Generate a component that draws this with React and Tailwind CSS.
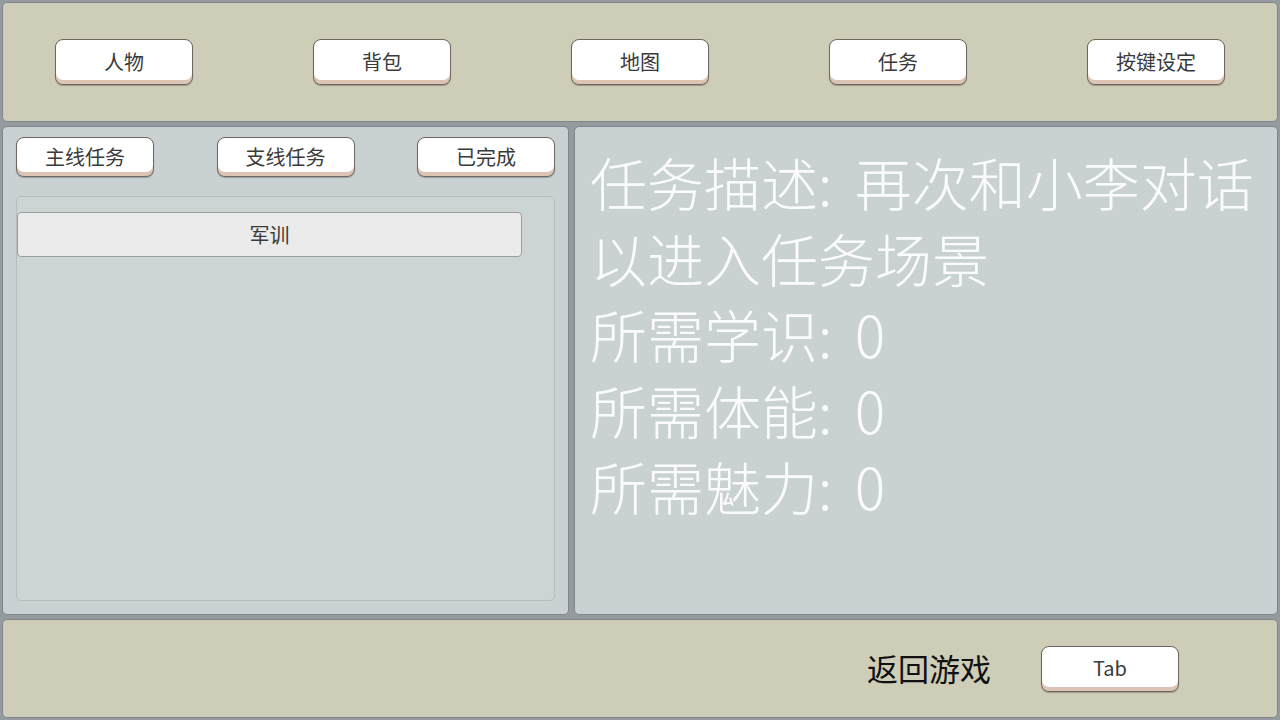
import React from "react";

const TOP_TABS = ["人物", "背包", "地图", "任务", "按键设定"];
const QUEST_TABS = ["主线任务", "支线任务", "已完成"];
const QUESTS = ["军训"];

const FONT = {
  fontFamily: '"Noto Sans CJK SC", "Noto Sans", sans-serif',
};

function GameButton({ children, className = "" }) {
  return (
    <button
      className={`flex items-center justify-center rounded-[8px] border-[1.5px] border-[#6e665f] bg-white text-[#3a3a3a] shadow-[inset_0_-4px_0_#dcc4b4,0_1px_1px_rgba(0,0,0,0.25)] ${className}`}
    >
      {children}
    </button>
  );
}

export default function App() {
  return (
    <div
      style={FONT}
      className="flex h-[720px] w-[1280px] flex-col gap-[4px] overflow-hidden bg-[#959a9e] p-[2px]"
    >
      {/* top nav */}
      <div className="flex h-[120px] shrink-0 items-center justify-between rounded-[5px] border border-[#7f8589] bg-[#cecdb8] px-[52px]">
        {TOP_TABS.map((t) => (
          <GameButton key={t} className="h-[46px] w-[138px] pb-[1px] text-[20px]">
            {t}
          </GameButton>
        ))}
      </div>

      {/* middle */}
      <div className="flex h-[489px] shrink-0 gap-[5px]">
        <div className="flex w-[567px] flex-col rounded-[5px] border border-[#7f8589] bg-[#c9d1d3] px-[13px] pb-[13px] pt-[10px]">
          <div className="flex justify-between">
            {QUEST_TABS.map((t) => (
              <GameButton key={t} className="h-[40px] w-[138px] text-[20px]">
                {t}
              </GameButton>
            ))}
          </div>
          <div className="mt-[19px] flex-1 rounded-[5px] border border-[#b6bdbf] bg-[#cdd4d4] pr-[32px] pt-[15px]">
            {QUESTS.map((q) => (
              <div
                key={q}
                className="flex h-[45px] items-center justify-center rounded-[4px] border border-[#9a9c9d] bg-[#ebebeb] text-[20px] text-[#3a3a3a]"
              >
                {q}
              </div>
            ))}
          </div>
        </div>

        <div className="flex-1 rounded-[5px] border border-[#7f8589] bg-[#c9d1d3] pl-[15px] pr-[6px] pt-[16px]">
          <div className="text-[57px] font-light leading-[76px] text-[#fbfbfb] [word-spacing:10px]">
            <p>任务描述: 再次和小李对话以进入任务场景</p>
            <p>所需学识: 0</p>
            <p>所需体能: 0</p>
            <p>所需魅力: 0</p>
          </div>
        </div>
      </div>

      {/* bottom bar */}
      <div className="flex flex-1 items-center justify-end gap-[50px] rounded-[5px] border border-[#7f8589] bg-[#cecdb8] pr-[98px]">
        <span className="text-[31px] text-[#111]">返回游戏</span>
        <GameButton className="h-[46px] w-[138px] pb-[1px] text-[20px]">
          Tab
        </GameButton>
      </div>
    </div>
  );
}
